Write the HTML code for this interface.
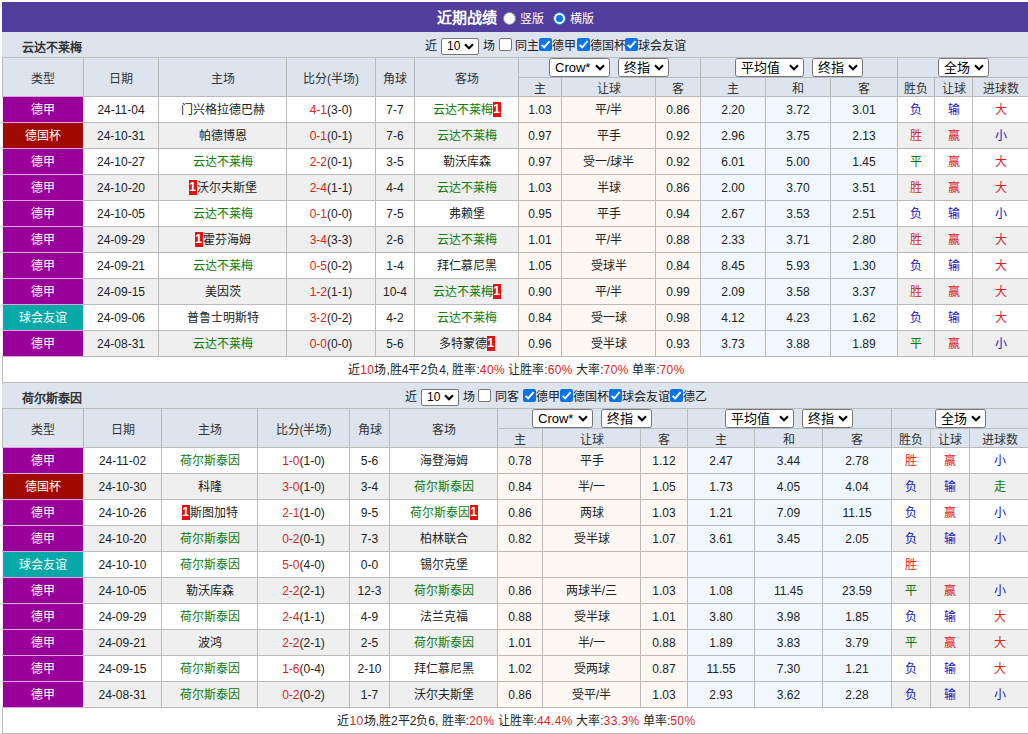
<!DOCTYPE html><html lang="zh-CN"><head><meta charset="utf-8"><title>近期战绩</title><style>
html,body{margin:0;padding:0;background:#fff;}
body{width:1028px;height:734px;overflow:hidden;position:relative;font-family:"Liberation Sans",sans-serif;font-size:12px;color:#222;}
#wrap{position:absolute;left:2px;top:2px;width:1028px;}
.banner{height:30px;background:#523e9c;color:#fff;position:relative;}
.banner .ttl{position:absolute;left:435px;top:1px;line-height:30px;font-size:15px;font-weight:bold;}
.banner .opt{position:absolute;top:1px;line-height:32px;font-size:12px;}
.radio{position:absolute;width:13px;height:13px;border-radius:50%;background:#fff;border:1px solid #8a8a9a;box-sizing:border-box;}
.radio.on{border:1.5px solid #0a74f0;}
.radio.on i{position:absolute;left:1.5px;top:1.5px;width:7px;height:7px;border-radius:50%;background:#0a74f0;}
.info{height:25px;background:#dde4ed;position:relative;line-height:25px;}
.info b{position:absolute;left:20px;top:4px;font-size:12px;color:#333;}
.info span{position:absolute;top:2px;white-space:nowrap;}
.cb{position:absolute;width:13px;height:13px;box-sizing:border-box;border:1px solid #767676;border-radius:2px;background:#fff;}
.cb.on{border:none;background:#0b74e5;}
.cb.on svg{position:absolute;left:0;top:0;}
.sel{position:absolute;height:19px;box-sizing:border-box;border:1px solid #767676;border-radius:2.5px;background:#fff;font-size:13px;line-height:17px;color:#000;padding-left:5px;white-space:nowrap;text-align:left;}
.sel svg{position:absolute;right:4px;top:5px;}
.sel.sm{border-radius:2px;height:17px;font-size:12px;line-height:15px;}
.sel.sm svg{top:4px;}
table{border-collapse:separate;border-spacing:1px;background:#bbb;table-layout:fixed;width:1028px;}
td,th{padding:0;text-align:center;font-weight:normal;overflow:hidden;white-space:nowrap;}
th{background:#dde4ed;color:#333;position:relative;}
tr.h1 th{height:19px;}
tr.h2 th{height:18px;}
tr.d td{height:23px;line-height:23px;padding-top:2px;background:#fff;}
tr.d.alt td{background:#efefef;}
tr.d td.o{background:#fdf8f3;}
tr.d td.e{background:#f0f8fd;}
td.tp{background:#990099 !important;color:#fff;box-shadow:-1px 0 0 #f7eaf7,1px 0 0 #f7eaf7,0 1px 0 #e2a4dc,0 -1px 0 #e2a4dc;}
td.tr{background:#a00a00 !important;color:#fff;box-shadow:-1px 0 0 #f7eaf7,1px 0 0 #f7eaf7,0 1px 0 #e2a4dc,0 -1px 0 #e2a4dc;}
td.tt{background:#06a8a8 !important;color:#fff;box-shadow:-1px 0 0 #f7eaf7,1px 0 0 #f7eaf7,0 1px 0 #e2a4dc,0 -1px 0 #e2a4dc;}
.g{color:#0a7a0a;}
.r{color:#dc241c;}
.b{color:#1212c6;}
.rc{display:inline-block;background:#e8100f;color:#fff;font-weight:bold;width:8px;height:15px;line-height:15px;font-size:12px;vertical-align:middle;position:relative;top:-1px;text-align:center;}
.sum .r{letter-spacing:.4px;}
.sum{height:25px;line-height:27px;background:#fff;text-align:center;border-left:1px solid #bbb;border-bottom:1px solid #bbb;}
</style></head><body><div id="wrap"><div class="banner"><span class="ttl">近期战绩</span><div class="radio" style="left:501px;top:10px"></div><span class="opt" style="left:518px">竖版</span><div class="radio on" style="left:551px;top:10px"><i></i></div><span class="opt" style="left:568px">横版</span></div><div class="info"><b>云达不莱梅</b><span style="left:423px">近</span><div class="sel sm" style="left:439px;top:6px;width:38px">10<svg width="10" height="7" viewBox="0 0 10 7"><path d="M1 1.2 L5 5.2 L9 1.2" fill="none" stroke="#000" stroke-width="2.1"/></svg></div><span style="left:481px">场</span><div class="cb" style="left:497px;top:6px"></div><span style="left:513px">同主</span><div class="cb on" style="left:537px;top:6px"><svg width="13" height="13" viewBox="0 0 13 13"><path d="M2.6 6.8 L5.2 9.4 L10.6 3.2" fill="none" stroke="#fff" stroke-width="1.9"/></svg></div><span style="left:550px">德甲</span><div class="cb on" style="left:575px;top:6px"><svg width="13" height="13" viewBox="0 0 13 13"><path d="M2.6 6.8 L5.2 9.4 L10.6 3.2" fill="none" stroke="#fff" stroke-width="1.9"/></svg></div><span style="left:588px">德国杯</span><div class="cb on" style="left:623px;top:6px"><svg width="13" height="13" viewBox="0 0 13 13"><path d="M2.6 6.8 L5.2 9.4 L10.6 3.2" fill="none" stroke="#fff" stroke-width="1.9"/></svg></div><span style="left:636px">球会友谊</span></div><table cellspacing="1" cellpadding="0"><colgroup><col style="width:80px"><col style="width:74px"><col style="width:127px"><col style="width:88px"><col style="width:38px"><col style="width:103px"><col style="width:42px"><col style="width:93px"><col style="width:44px"><col style="width:64px"><col style="width:64px"><col style="width:66px"><col style="width:36px"><col style="width:37px"><col style="width:56px"></colgroup><tr class="h1"><th rowspan="2">类型</th><th rowspan="2">日期</th><th rowspan="2">主场</th><th rowspan="2">比分(半场)</th><th rowspan="2">角球</th><th rowspan="2">客场</th><th colspan="3"><div class="sel" style="left:30px;top:0px;width:61px">Crow*<svg width="10" height="7" viewBox="0 0 10 7"><path d="M1 1.2 L5 5.2 L9 1.2" fill="none" stroke="#000" stroke-width="2.1"/></svg></div><div class="sel" style="left:99px;top:0px;width:51px">终指<svg width="10" height="7" viewBox="0 0 10 7"><path d="M1 1.2 L5 5.2 L9 1.2" fill="none" stroke="#000" stroke-width="2.1"/></svg></div></th><th colspan="3"><div class="sel" style="left:34px;top:0px;width:69px">平均值<svg width="10" height="7" viewBox="0 0 10 7"><path d="M1 1.2 L5 5.2 L9 1.2" fill="none" stroke="#000" stroke-width="2.1"/></svg></div><div class="sel" style="left:111px;top:0px;width:51px">终指<svg width="10" height="7" viewBox="0 0 10 7"><path d="M1 1.2 L5 5.2 L9 1.2" fill="none" stroke="#000" stroke-width="2.1"/></svg></div></th><th colspan="3"><div class="sel" style="left:40px;top:0px;width:51px">全场<svg width="10" height="7" viewBox="0 0 10 7"><path d="M1 1.2 L5 5.2 L9 1.2" fill="none" stroke="#000" stroke-width="2.1"/></svg></div></th></tr><tr class="h2"><th>主</th><th>让球</th><th>客</th><th>主</th><th>和</th><th>客</th><th>胜负</th><th>让球</th><th>进球数</th></tr><tr class="d"><td class="tp">德甲</td><td>24-11-04</td><td>门兴格拉德巴赫</td><td><span class="r">4-1</span>(3-0)</td><td>7-7</td><td><span class="g">云达不莱梅</span><span class="rc">1</span></td><td class="o">1.03</td><td class="o">平/半</td><td class="o">0.86</td><td class="e">2.20</td><td class="e">3.72</td><td class="e">3.01</td><td class="b">负</td><td class="b">输</td><td class="r">大</td></tr><tr class="d alt"><td class="tr">德国杯</td><td>24-10-31</td><td>帕德博恩</td><td><span class="r">0-1</span>(0-1)</td><td>7-6</td><td><span class="g">云达不莱梅</span></td><td class="o">0.97</td><td class="o">平手</td><td class="o">0.92</td><td class="e">2.96</td><td class="e">3.75</td><td class="e">2.13</td><td class="r">胜</td><td class="r">赢</td><td class="b">小</td></tr><tr class="d"><td class="tp">德甲</td><td>24-10-27</td><td><span class="g">云达不莱梅</span></td><td><span class="r">2-2</span>(0-1)</td><td>3-5</td><td>勒沃库森</td><td class="o">0.97</td><td class="o">受一/球半</td><td class="o">0.92</td><td class="e">6.01</td><td class="e">5.00</td><td class="e">1.45</td><td class="g">平</td><td class="r">赢</td><td class="r">大</td></tr><tr class="d alt"><td class="tp">德甲</td><td>24-10-20</td><td><span class="rc">1</span>沃尔夫斯堡</td><td><span class="r">2-4</span>(1-1)</td><td>4-4</td><td><span class="g">云达不莱梅</span></td><td class="o">1.03</td><td class="o">半球</td><td class="o">0.86</td><td class="e">2.00</td><td class="e">3.70</td><td class="e">3.51</td><td class="r">胜</td><td class="r">赢</td><td class="r">大</td></tr><tr class="d"><td class="tp">德甲</td><td>24-10-05</td><td><span class="g">云达不莱梅</span></td><td><span class="r">0-1</span>(0-0)</td><td>7-5</td><td>弗赖堡</td><td class="o">0.95</td><td class="o">平手</td><td class="o">0.94</td><td class="e">2.67</td><td class="e">3.53</td><td class="e">2.51</td><td class="b">负</td><td class="b">输</td><td class="b">小</td></tr><tr class="d alt"><td class="tp">德甲</td><td>24-09-29</td><td><span class="rc">1</span>霍芬海姆</td><td><span class="r">3-4</span>(3-3)</td><td>2-6</td><td><span class="g">云达不莱梅</span></td><td class="o">1.01</td><td class="o">平/半</td><td class="o">0.88</td><td class="e">2.33</td><td class="e">3.71</td><td class="e">2.80</td><td class="r">胜</td><td class="r">赢</td><td class="r">大</td></tr><tr class="d"><td class="tp">德甲</td><td>24-09-21</td><td><span class="g">云达不莱梅</span></td><td><span class="r">0-5</span>(0-2)</td><td>1-4</td><td>拜仁慕尼黑</td><td class="o">1.05</td><td class="o">受球半</td><td class="o">0.84</td><td class="e">8.45</td><td class="e">5.93</td><td class="e">1.30</td><td class="b">负</td><td class="b">输</td><td class="r">大</td></tr><tr class="d alt"><td class="tp">德甲</td><td>24-09-15</td><td>美因茨</td><td><span class="r">1-2</span>(1-1)</td><td>10-4</td><td><span class="g">云达不莱梅</span><span class="rc">1</span></td><td class="o">0.90</td><td class="o">平/半</td><td class="o">0.99</td><td class="e">2.09</td><td class="e">3.58</td><td class="e">3.37</td><td class="r">胜</td><td class="r">赢</td><td class="r">大</td></tr><tr class="d"><td class="tt">球会友谊</td><td>24-09-06</td><td>普鲁士明斯特</td><td><span class="r">3-2</span>(0-2)</td><td>4-2</td><td><span class="g">云达不莱梅</span></td><td class="o">0.84</td><td class="o">受一球</td><td class="o">0.98</td><td class="e">4.12</td><td class="e">4.23</td><td class="e">1.62</td><td class="b">负</td><td class="b">输</td><td class="r">大</td></tr><tr class="d alt"><td class="tp">德甲</td><td>24-08-31</td><td><span class="g">云达不莱梅</span></td><td><span class="r">0-0</span>(0-0)</td><td>5-6</td><td>多特蒙德<span class="rc">1</span></td><td class="o">0.96</td><td class="o">受半球</td><td class="o">0.93</td><td class="e">3.73</td><td class="e">3.88</td><td class="e">1.89</td><td class="g">平</td><td class="r">赢</td><td class="b">小</td></tr></table><div class="sum">近<span class="r">10</span>场,胜4平2负4, 胜率:<span class="r">40%</span> 让胜率:<span class="r">60%</span> 大率:<span class="r">70%</span> 单率:<span class="r">70%</span></div><div class="info"><b>荷尔斯泰因</b><span style="left:403px">近</span><div class="sel sm" style="left:419px;top:6px;width:38px">10<svg width="10" height="7" viewBox="0 0 10 7"><path d="M1 1.2 L5 5.2 L9 1.2" fill="none" stroke="#000" stroke-width="2.1"/></svg></div><span style="left:461px">场</span><div class="cb" style="left:476px;top:6px"></div><span style="left:493px">同客</span><div class="cb on" style="left:521px;top:6px"><svg width="13" height="13" viewBox="0 0 13 13"><path d="M2.6 6.8 L5.2 9.4 L10.6 3.2" fill="none" stroke="#fff" stroke-width="1.9"/></svg></div><span style="left:534px">德甲</span><div class="cb on" style="left:558px;top:6px"><svg width="13" height="13" viewBox="0 0 13 13"><path d="M2.6 6.8 L5.2 9.4 L10.6 3.2" fill="none" stroke="#fff" stroke-width="1.9"/></svg></div><span style="left:571px">德国杯</span><div class="cb on" style="left:607px;top:6px"><svg width="13" height="13" viewBox="0 0 13 13"><path d="M2.6 6.8 L5.2 9.4 L10.6 3.2" fill="none" stroke="#fff" stroke-width="1.9"/></svg></div><span style="left:620px">球会友谊</span><div class="cb on" style="left:668px;top:6px"><svg width="13" height="13" viewBox="0 0 13 13"><path d="M2.6 6.8 L5.2 9.4 L10.6 3.2" fill="none" stroke="#fff" stroke-width="1.9"/></svg></div><span style="left:681px">德乙</span></div><table cellspacing="1" cellpadding="0"><colgroup><col style="width:80px"><col style="width:77px"><col style="width:95px"><col style="width:91px"><col style="width:39px"><col style="width:107px"><col style="width:44px"><col style="width:97px"><col style="width:46px"><col style="width:66px"><col style="width:67px"><col style="width:68px"><col style="width:38px"><col style="width:38px"><col style="width:59px"></colgroup><tr class="h1"><th rowspan="2">类型</th><th rowspan="2">日期</th><th rowspan="2">主场</th><th rowspan="2">比分(半场)</th><th rowspan="2">角球</th><th rowspan="2">客场</th><th colspan="3"><div class="sel" style="left:34px;top:0px;width:61px">Crow*<svg width="10" height="7" viewBox="0 0 10 7"><path d="M1 1.2 L5 5.2 L9 1.2" fill="none" stroke="#000" stroke-width="2.1"/></svg></div><div class="sel" style="left:103px;top:0px;width:51px">终指<svg width="10" height="7" viewBox="0 0 10 7"><path d="M1 1.2 L5 5.2 L9 1.2" fill="none" stroke="#000" stroke-width="2.1"/></svg></div></th><th colspan="3"><div class="sel" style="left:37px;top:0px;width:69px">平均值<svg width="10" height="7" viewBox="0 0 10 7"><path d="M1 1.2 L5 5.2 L9 1.2" fill="none" stroke="#000" stroke-width="2.1"/></svg></div><div class="sel" style="left:114px;top:0px;width:51px">终指<svg width="10" height="7" viewBox="0 0 10 7"><path d="M1 1.2 L5 5.2 L9 1.2" fill="none" stroke="#000" stroke-width="2.1"/></svg></div></th><th colspan="3"><div class="sel" style="left:43px;top:0px;width:51px">全场<svg width="10" height="7" viewBox="0 0 10 7"><path d="M1 1.2 L5 5.2 L9 1.2" fill="none" stroke="#000" stroke-width="2.1"/></svg></div></th></tr><tr class="h2"><th>主</th><th>让球</th><th>客</th><th>主</th><th>和</th><th>客</th><th>胜负</th><th>让球</th><th>进球数</th></tr><tr class="d"><td class="tp">德甲</td><td>24-11-02</td><td><span class="g">荷尔斯泰因</span></td><td><span class="r">1-0</span>(1-0)</td><td>5-6</td><td>海登海姆</td><td class="o">0.78</td><td class="o">平手</td><td class="o">1.12</td><td class="e">2.47</td><td class="e">3.44</td><td class="e">2.78</td><td class="r">胜</td><td class="r">赢</td><td class="b">小</td></tr><tr class="d alt"><td class="tr">德国杯</td><td>24-10-30</td><td>科隆</td><td><span class="r">3-0</span>(1-0)</td><td>3-4</td><td><span class="g">荷尔斯泰因</span></td><td class="o">0.84</td><td class="o">半/一</td><td class="o">1.05</td><td class="e">1.73</td><td class="e">4.05</td><td class="e">4.04</td><td class="b">负</td><td class="b">输</td><td class="g">走</td></tr><tr class="d"><td class="tp">德甲</td><td>24-10-26</td><td><span class="rc">1</span>斯图加特</td><td><span class="r">2-1</span>(1-0)</td><td>9-5</td><td><span class="g">荷尔斯泰因</span><span class="rc">1</span></td><td class="o">0.86</td><td class="o">两球</td><td class="o">1.03</td><td class="e">1.21</td><td class="e">7.09</td><td class="e">11.15</td><td class="b">负</td><td class="r">赢</td><td class="b">小</td></tr><tr class="d alt"><td class="tp">德甲</td><td>24-10-20</td><td><span class="g">荷尔斯泰因</span></td><td><span class="r">0-2</span>(0-1)</td><td>7-3</td><td>柏林联合</td><td class="o">0.82</td><td class="o">受半球</td><td class="o">1.07</td><td class="e">3.61</td><td class="e">3.45</td><td class="e">2.05</td><td class="b">负</td><td class="b">输</td><td class="b">小</td></tr><tr class="d"><td class="tt">球会友谊</td><td>24-10-10</td><td><span class="g">荷尔斯泰因</span></td><td><span class="r">5-0</span>(4-0)</td><td>0-0</td><td>锡尔克堡</td><td class="o"></td><td class="o"></td><td class="o"></td><td class="e"></td><td class="e"></td><td class="e"></td><td class="r">胜</td><td class=""></td><td class=""></td></tr><tr class="d alt"><td class="tp">德甲</td><td>24-10-05</td><td>勒沃库森</td><td><span class="r">2-2</span>(2-1)</td><td>12-3</td><td><span class="g">荷尔斯泰因</span></td><td class="o">0.86</td><td class="o">两球半/三</td><td class="o">1.03</td><td class="e">1.08</td><td class="e">11.45</td><td class="e">23.59</td><td class="g">平</td><td class="r">赢</td><td class="b">小</td></tr><tr class="d"><td class="tp">德甲</td><td>24-09-29</td><td><span class="g">荷尔斯泰因</span></td><td><span class="r">2-4</span>(1-1)</td><td>4-9</td><td>法兰克福</td><td class="o">0.88</td><td class="o">受半球</td><td class="o">1.01</td><td class="e">3.80</td><td class="e">3.98</td><td class="e">1.85</td><td class="b">负</td><td class="b">输</td><td class="r">大</td></tr><tr class="d alt"><td class="tp">德甲</td><td>24-09-21</td><td>波鸿</td><td><span class="r">2-2</span>(2-1)</td><td>2-5</td><td><span class="g">荷尔斯泰因</span></td><td class="o">1.01</td><td class="o">半/一</td><td class="o">0.88</td><td class="e">1.89</td><td class="e">3.83</td><td class="e">3.79</td><td class="g">平</td><td class="r">赢</td><td class="r">大</td></tr><tr class="d"><td class="tp">德甲</td><td>24-09-15</td><td><span class="g">荷尔斯泰因</span></td><td><span class="r">1-6</span>(0-4)</td><td>2-10</td><td>拜仁慕尼黑</td><td class="o">1.02</td><td class="o">受两球</td><td class="o">0.87</td><td class="e">11.55</td><td class="e">7.30</td><td class="e">1.21</td><td class="b">负</td><td class="b">输</td><td class="r">大</td></tr><tr class="d alt"><td class="tp">德甲</td><td>24-08-31</td><td><span class="g">荷尔斯泰因</span></td><td><span class="r">0-2</span>(0-2)</td><td>1-7</td><td>沃尔夫斯堡</td><td class="o">0.86</td><td class="o">受平/半</td><td class="o">1.03</td><td class="e">2.93</td><td class="e">3.62</td><td class="e">2.28</td><td class="b">负</td><td class="b">输</td><td class="b">小</td></tr></table><div class="sum">近<span class="r">10</span>场,胜2平2负6, 胜率:<span class="r">20%</span> 让胜率:<span class="r">44.4%</span> 大率:<span class="r">33.3%</span> 单率:<span class="r">50%</span></div></div></body></html>
